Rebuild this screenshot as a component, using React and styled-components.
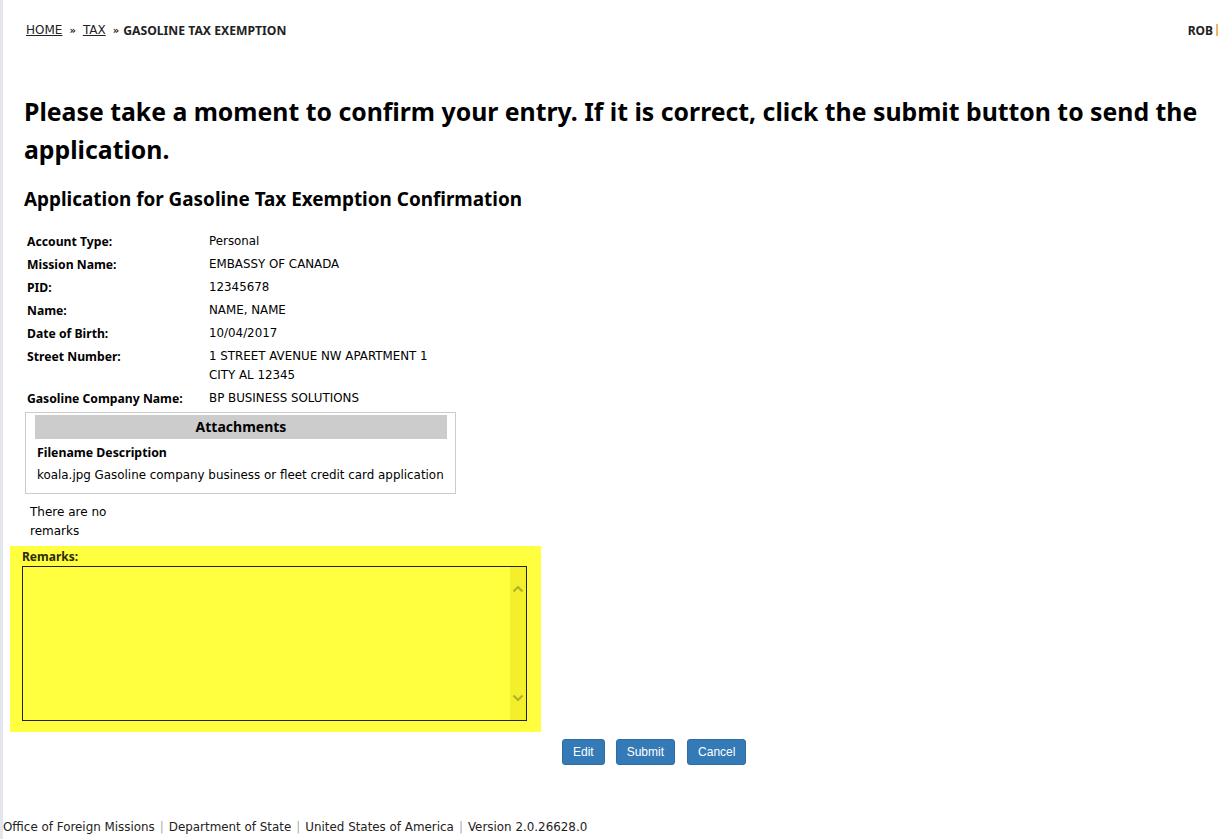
import React from 'react'
import styled, { createGlobalStyle } from 'styled-components'

const GlobalStyle = createGlobalStyle`
  html, body {
    margin: 0;
    padding: 0;
    background: #fff;
    overflow: hidden;
  }
  body {
    font-family: "DejaVu Sans", Verdana, sans-serif;
    color: #000;
  }
`

const boldFont = `"Noto Sans", "DejaVu Sans", sans-serif`

const Page = styled.div`
  width: 1219px;
  height: 839px;
  display: flex;
  background: #fff;
  overflow: hidden;
`

const SideStrip = styled.div`
  width: 3px;
  flex: none;
  background: #e3e6ea;
`

const Main = styled.div`
  flex: 1;
  display: flex;
  flex-direction: column;
  min-width: 0;
`

const TopBar = styled.div`
  display: flex;
  justify-content: space-between;
  align-items: center;
  height: 20px;
  margin-top: 20px;
  padding-left: 23px;
  font-size: 12px;
`

const Crumbs = styled.div`
  display: flex;
  align-items: center;
  gap: 7px;
  color: #222;
`

const CrumbLink = styled.a`
  color: #222;
  text-decoration: underline;
`

const CrumbSep = styled.span`
  font-weight: bold;
  font-size: 10px;
`

const CrumbCurrent = styled.span`
  font-family: ${boldFont};
  font-weight: bold;
  font-size: 12.2px;
  margin-left: -3px;
`

const User = styled.div`
  display: flex;
  align-items: center;
  gap: 3px;
  font-family: ${boldFont};
  font-weight: bold;
  color: #222;
  margin-right: 1px;
`

const UserBar = styled.span`
  width: 2px;
  height: 12px;
  background: #f6b26b;
`

const Content = styled.div`
  padding-left: 21px;
`

const Title = styled.h1`
  margin: 52px 0 0;
  font-family: ${boldFont};
  font-size: 24.8px;
  line-height: 38px;
  font-weight: bold;
  color: #000;
`

const SubTitle = styled.h2`
  margin: 18px 0 20px;
  font-family: ${boldFont};
  font-size: 18.9px;
  line-height: 26px;
  font-weight: bold;
`

const InfoTable = styled.div`
  display: grid;
  grid-template-columns: 182px auto;
  row-gap: 4px;
  padding-left: 3px;
  font-size: 11.85px;
  line-height: 19px;
`

const Label = styled.div`
  font-family: ${boldFont};
  font-weight: bold;
  font-size: 12.2px;
`

const Value = styled.div``

const AttachBox = styled.div`
  width: 412px;
  margin: 4px 0 0 1px;
  padding: 2px 8px 8px 9px;
  border: 1px solid #ccc;
  font-size: 11.9px;
`

const AttachHead = styled.div`
  background: #ccc;
  height: 24px;
  line-height: 24px;
  text-align: center;
  font-family: ${boldFont};
  font-weight: bold;
  font-size: 14px;
`

const AttachCols = styled.div`
  font-family: ${boldFont};
  font-weight: bold;
  font-size: 12.3px;
  margin-top: 4px;
  padding-left: 2px;
  line-height: 19px;
`

const AttachRow = styled.div`
  padding-left: 2px;
  margin-top: 4px;
  line-height: 19px;
`

const NoRemarks = styled.div`
  width: 90px;
  margin: 9px 0 0 6px;
  font-size: 12px;
  line-height: 19px;
`

const RemarksPanel = styled.div`
  width: 505px;
  margin: 5px 0 0 -14px;
  padding: 2px 14px 11px 12px;
  background: #ffff40;
`

const RemarksLabel = styled.div`
  font-family: ${boldFont};
  font-weight: bold;
  font-size: 12px;
  line-height: 17px;
  color: #2b2b0a;
`

const RemarksArea = styled.div`
  display: flex;
  height: 153px;
  border: 1px solid #222;
  margin-top: 1px;
`

const AreaBody = styled.div`
  flex: 1;
`

const ScrollTrack = styled.div`
  width: 16px;
  background: #f3ef2a;
  display: flex;
  flex-direction: column;
  justify-content: space-between;
  align-items: center;
  padding: 18px 0 18px;
`

const Buttons = styled.div`
  display: flex;
  gap: 11px;
  margin: 7px 0 0 538px;
`

const Button = styled.button`
  height: 26px;
  padding: 0 10px;
  margin-left: ${p => p.$shift || 0}px;
  background: #337ab7;
  color: #fff;
  border: 1px solid #2e6da4;
  border-radius: 3px;
  font-family: "Liberation Sans", Arial, sans-serif;
  font-size: 12px;
  cursor: pointer;
`

const Footer = styled.div`
  margin-top: auto;
  margin-bottom: 5px;
  font-size: 11.9px;
  color: #222;
  display: flex;
  gap: 5px;
`

const FootSep = styled.span`
  color: #aaa;
`

const Chevron = ({ up }) => (
  <svg width="12" height="8" viewBox="0 0 12 8">
    <path
      d={up ? 'M1.5 6.5 L6 2 L10.5 6.5' : 'M1.5 1.5 L6 6 L10.5 1.5'}
      fill="none"
      stroke="#b5b12a"
      strokeWidth="2.2"
    />
  </svg>
)

const rows = [
  ['Account Type:', 'Personal'],
  ['Mission Name:', 'EMBASSY OF CANADA'],
  ['PID:', '12345678'],
  ['Name:', 'NAME, NAME'],
  ['Date of Birth:', '10/04/2017'],
  ['Street Number:', <>1 STREET AVENUE NW APARTMENT 1<br />CITY AL 12345</>],
  ['Gasoline Company Name:', 'BP BUSINESS SOLUTIONS'],
]

export default function App() {
  return (
    <>
      <GlobalStyle />
      <Page>
        <SideStrip />
        <Main>
          <TopBar>
            <Crumbs>
              <CrumbLink href="#">HOME</CrumbLink>
              <CrumbSep>»</CrumbSep>
              <CrumbLink href="#">TAX</CrumbLink>
              <CrumbSep>»</CrumbSep>
              <CrumbCurrent>GASOLINE TAX EXEMPTION</CrumbCurrent>
            </Crumbs>
            <User>
              ROB <UserBar />
            </User>
          </TopBar>
          <Content>
            <Title>
              Please take a moment to confirm your entry. If it is correct, click the submit button to send the application.
            </Title>
            <SubTitle>Application for Gasoline Tax Exemption Confirmation</SubTitle>
            <InfoTable>
              {rows.map(([l, v]) => (
                <React.Fragment key={l}>
                  <Label>{l}</Label>
                  <Value>{v}</Value>
                </React.Fragment>
              ))}
            </InfoTable>
            <AttachBox>
              <AttachHead>Attachments</AttachHead>
              <AttachCols>Filename Description</AttachCols>
              <AttachRow>koala.jpg Gasoline company business or fleet credit card application</AttachRow>
            </AttachBox>
            <NoRemarks>There are no remarks</NoRemarks>
            <RemarksPanel>
              <RemarksLabel>Remarks:</RemarksLabel>
              <RemarksArea>
                <AreaBody />
                <ScrollTrack>
                  <Chevron up />
                  <Chevron />
                </ScrollTrack>
              </RemarksArea>
            </RemarksPanel>
            <Buttons>
              <Button>Edit</Button>
              <Button>Submit</Button>
              <Button $shift={1}>Cancel</Button>
            </Buttons>
          </Content>
          <Footer>
            <span>Office of Foreign Missions</span>
            <FootSep>|</FootSep>
            <span>Department of State</span>
            <FootSep>|</FootSep>
            <span>United States of America</span>
            <FootSep>|</FootSep>
            <span>Version 2.0.26628.0</span>
          </Footer>
        </Main>
      </Page>
    </>
  )
}
